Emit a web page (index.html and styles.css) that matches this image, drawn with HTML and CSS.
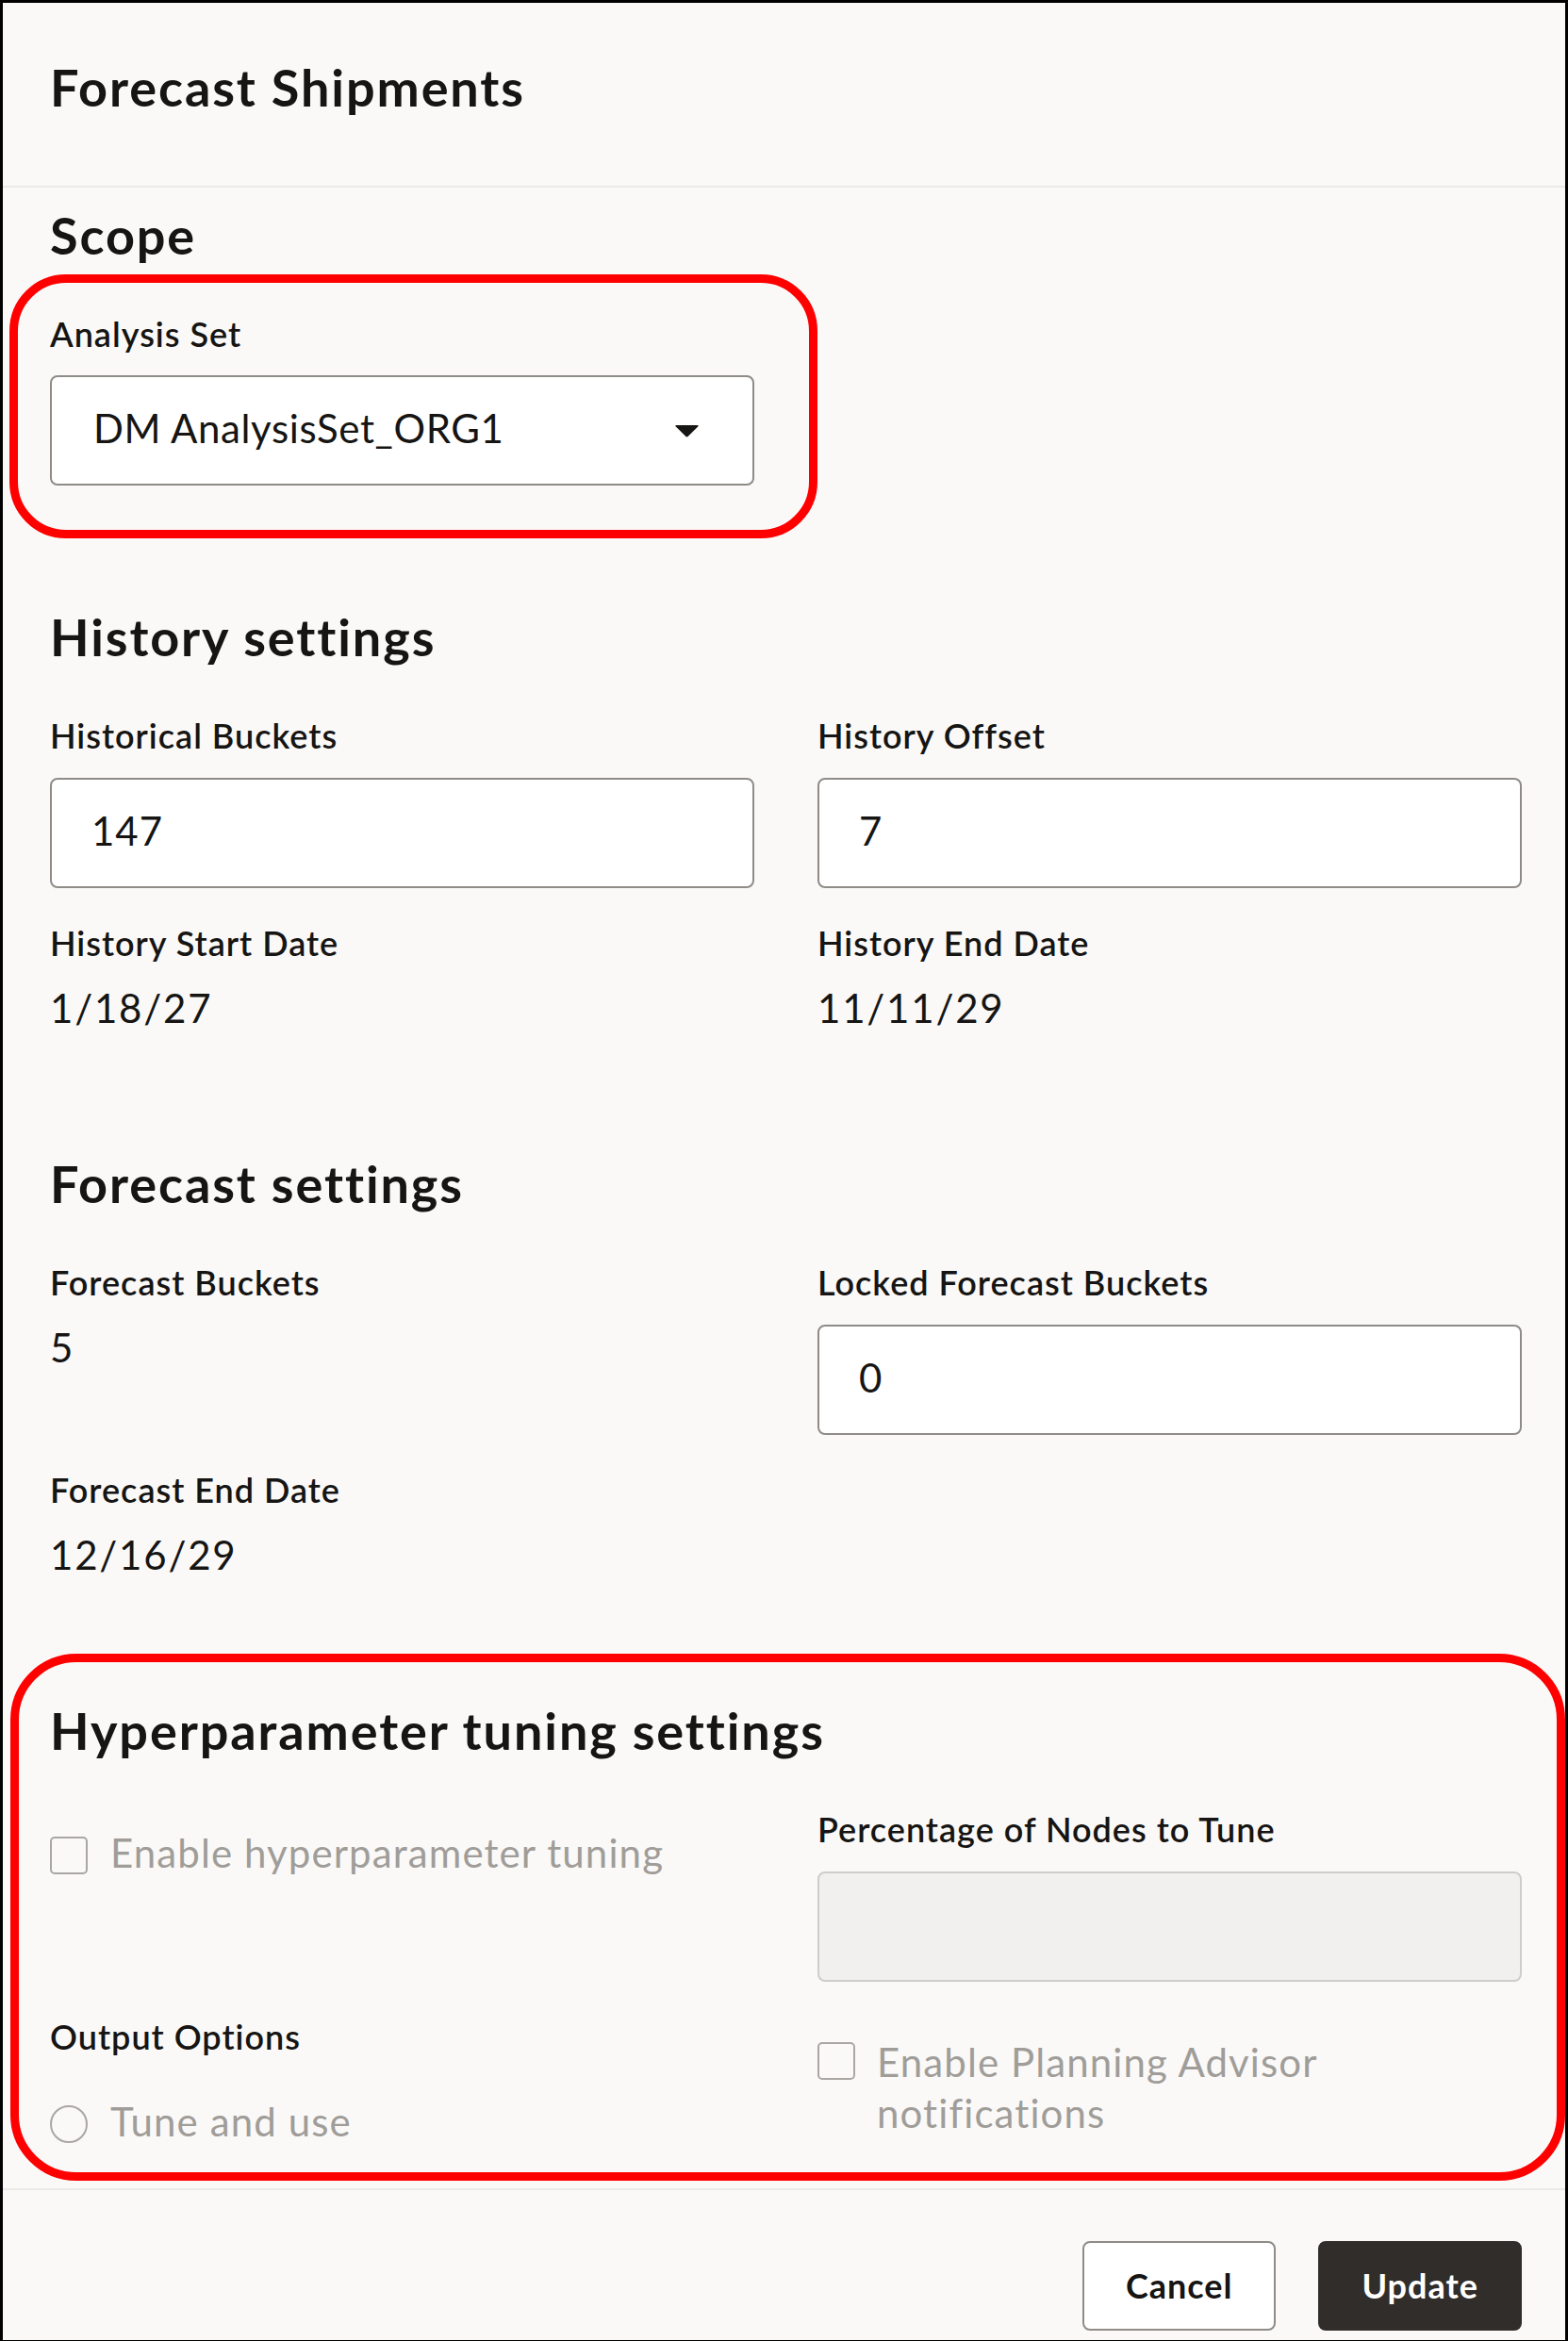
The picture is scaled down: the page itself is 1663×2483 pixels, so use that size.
FILE: index.html
```html
<!DOCTYPE html>
<html lang="en">
<head>
  <meta charset="UTF-8">
  <meta name="viewport" content="width=device-width, initial-scale=1.0">
  <title>Forecast Shipments</title>
  <link rel="stylesheet" href="styles.css">
</head>
<body>
  <div class="dialog">
    <header class="dialog-header">
      <h1>Forecast Shipments</h1>
    </header>

    <div class="dialog-body">
      <!-- Scope -->
      <section class="section">
        <h2>Scope</h2>
        <div class="grid">
          <div class="field callout callout-scope">
            <div class="label">Analysis Set</div>
            <div class="select">
              <span>DM AnalysisSet_ORG1</span>
              <svg class="arrow" width="27" height="14" viewBox="0 0 27 14">
                <path d="M2.5 1H24.5Q26.6 1 25.2 2.6L14.8 12.8Q13.5 14 12.2 12.8L1.8 2.6Q0.4 1 2.5 1Z" fill="#161513"/>
              </svg>
            </div>
          </div>
        </div>
      </section>

      <!-- History -->
      <section class="section">
        <h2>History settings</h2>
        <div class="grid">
          <div class="field">
            <div class="label">Historical Buckets</div>
            <div class="input">147</div>
          </div>
          <div class="field">
            <div class="label">History Offset</div>
            <div class="input">7</div>
          </div>
          <div class="field field-readonly">
            <div class="label">History Start Date</div>
            <div class="value">1/18/27</div>
          </div>
          <div class="field field-readonly">
            <div class="label">History End Date</div>
            <div class="value">11/11/29</div>
          </div>
        </div>
      </section>

      <!-- Forecast -->
      <section class="section">
        <h2>Forecast settings</h2>
        <div class="grid">
          <div class="field field-readonly">
            <div class="label">Forecast Buckets</div>
            <div class="value">5</div>
          </div>
          <div class="field">
            <div class="label">Locked Forecast Buckets</div>
            <div class="input">0</div>
          </div>
          <div class="field field-readonly">
            <div class="label">Forecast End Date</div>
            <div class="value">12/16/29</div>
          </div>
        </div>
      </section>

      <!-- Hyperparameter tuning -->
      <section class="section callout callout-tuning">
        <h2>Hyperparameter tuning settings</h2>
        <div class="grid">
          <div class="field">
            <div class="check check-top">
              <span class="box"></span>
              <span>Enable hyperparameter tuning</span>
            </div>
          </div>
          <div class="field">
            <div class="label">Percentage of Nodes to Tune</div>
            <div class="input input-disabled"></div>
          </div>
          <div class="field">
            <div class="label label-radio">Output Options</div>
            <div class="check">
              <span class="box box-round"></span>
              <span>Tune and use</span>
            </div>
          </div>
          <div class="field">
            <div class="check check-wrap">
              <span class="box"></span>
              <span class="check-text">Enable Planning Advisor notifications</span>
            </div>
          </div>
        </div>
      </section>
    </div>

    <footer class="dialog-footer">
      <button class="btn">Cancel</button>
      <button class="btn btn-primary">Update</button>
    </footer>
  </div>
</body>
</html>
```

FILE: styles.css
```css
body {
  margin: 0;
  background: #faf9f8;
  font-family: Lato, "Noto Sans", sans-serif;
  color: #161513;
}
.dialog {
  border: 3px solid #000;
  min-height: 100vh;
  box-sizing: border-box;
}
.dialog-header {
  padding: 57.5px 50px 72.5px;
  border-bottom: 2px solid #ecebe8;
}
h1, h2 {
  margin: 0;
  font-size: 54px;
  line-height: 64px;
  font-weight: 700;
  letter-spacing: 1.9px;
}
h2 {
  margin-bottom: 50px;
}
.dialog-body {
  padding: 18.5px 46px 45px 50px;
}
.section + .section {
  margin-top: 129px;
}
.grid {
  display: grid;
  grid-template-columns: 1fr 1fr;
  column-gap: 67px;
  row-gap: 36.5px;
}
.label {
  font-size: 36px;
  line-height: 44px;
  font-weight: 600;
  letter-spacing: 1px;
  margin-bottom: 22.5px;
}
.field-readonly .label {
  margin-bottom: 21px;
}
.label-radio {
  margin-bottom: 41.75px;
}
.value {
  font-size: 42px;
  line-height: 52px;
  letter-spacing: 1.8px;
}
.input, .select {
  box-sizing: border-box;
  height: 117px;
  border: 2px solid #8f8c88;
  border-radius: 8px;
  background: #fff;
  padding: 28px 42px 33px;
  font-size: 42px;
  line-height: 52px;
  letter-spacing: 1px;
}
.select {
  display: flex;
  justify-content: space-between;
  padding-left: 44px;
  padding-right: 56px;
  letter-spacing: 0.6px;
}
.select .arrow {
  align-self: center;
  margin-top: 5px;
}
.input-disabled {
  background: #f1f0ef;
  border-color: #cfcdca;
}
.check {
  display: flex;
  align-items: flex-start;
  gap: 24px;
  font-size: 42px;
  line-height: 52px;
  letter-spacing: 1.1px;
  color: #a09d99;
}
.check-top {
  padding-top: 20.75px;
}
.check-wrap {
  padding-top: 21.75px;
  line-height: 54px;
  gap: 23px;
}
.check-text {
  max-width: 580px;
}
.box {
  flex: none;
  width: 40px;
  height: 40px;
  box-sizing: border-box;
  border: 2px solid #aaa7a3;
  border-radius: 5px;
  margin-top: 9px;
}
.check-wrap .box {
  margin-top: 6px;
}
.box-round {
  border-radius: 50%;
}
.dialog-footer {
  border-top: 2px solid #ecebe8;
  padding: 54px 46px 10px 50px;
  display: flex;
  justify-content: flex-end;
  gap: 45px;
}
.btn {
  height: 95px;
  box-sizing: border-box;
  padding: 0 44px;
  border: 2px solid #8f8c88;
  border-radius: 8px;
  background: #fff;
  color: #161513;
  font-family: inherit;
  font-size: 36px;
  font-weight: 700;
  letter-spacing: 1px;
}
.btn-primary {
  background: #312d2a;
  border-color: #312d2a;
  color: #fff;
}

/* red highlight frames drawn over the form */
.callout {
  position: relative;
}
.callout::after {
  content: "";
  position: absolute;
  border: 9px solid #ff0000;
  pointer-events: none;
}
.callout-scope::after {
  top: -40.5px;
  bottom: -56px;
  left: -43px;
  right: -67px;
  border-radius: 60px;
}
.callout-tuning::after {
  top: -50px;
  bottom: -37px;
  left: -42px;
  right: -46px;
  border-radius: 70px;
}
```
